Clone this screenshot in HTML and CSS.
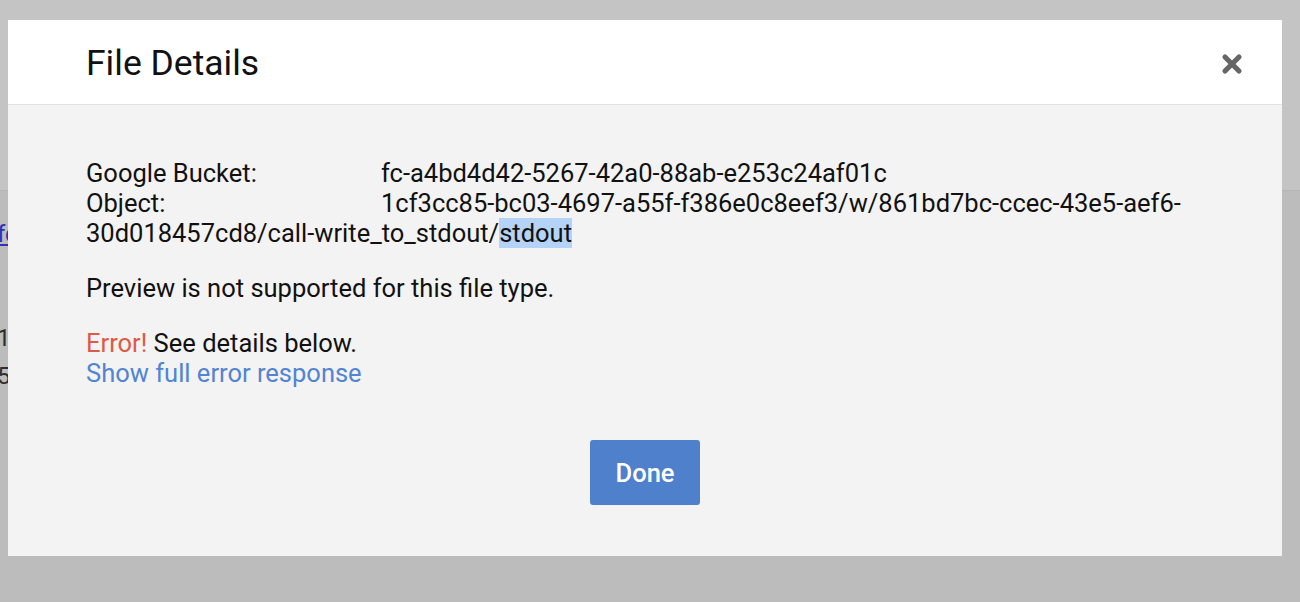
FILE: index.html
```html
<!doctype html>
<html lang="en">
	<head>
		<title>File Details</title>
		<meta charset="utf-8">
		<link rel="stylesheet" href="styles.css">
	</head>

<body>

	<!-- page behind the dialog, only its left edge shows -->
	<div class="page">
		<div class="page-top"></div>
		<div class="page-main">
			<div class="page-edge">
				<a class="page-link" href="#">fc</a>
				<div class="page-row first">1c</div>
				<div class="page-row">52</div>
			</div>
		</div>
	</div>

	<div class="backdrop">
		<div class="modal">
			<div class="modal-head">
				<h1 class="modal-title">File Details</h1>
				<button class="modal-close" aria-label="Close">
					<svg width="22" height="22" viewBox="0 0 22 22">
						<path d="M4 4 L18 18 M18 4 L4 18" stroke="#666" stroke-width="5.2" stroke-linecap="round"/>
					</svg>
				</button>
			</div>

			<div class="modal-body">
				<div class="details">
					<span class="label">Google Bucket:</span>fc-a4bd4d42-5267-42a0-88ab-e253c24af01c<br>
					<span class="label">Object:</span>1cf3cc85-bc03-4697-a55f-f386e0c8eef3/w/861bd7bc-ccec-43e5-aef6-<br>30d018457cd8/call-write_to_stdout/<span class="selected">stdout</span>
				</div>

				<p class="note">Preview is not supported for this file type.</p>

				<div class="error">
					<span class="error-word">Error!</span> See details below.<br>
					<a class="error-link" href="#">Show full error response</a>
				</div>

				<div class="actions">
					<button class="btn-done">Done</button>
				</div>
			</div>
		</div>
	</div>

</body>
</html>
```

FILE: styles.css
```css
html, body { margin: 0; padding: 0; }
body { font-family: Roboto, "Noto Sans", "Liberation Sans", sans-serif; background: #bebebe; overflow: hidden; height: 602px; }

/* page under the overlay */
.page { height: 602px; }
.page-top { height: 190px; background: #c4c4c4; border-bottom: 1px solid #b4b4b4; }
.page-main { background: #bcbcbc; height: 411px; padding-top: 28px; box-sizing: border-box; font-size: 24px; line-height: 30px; }
.page-edge { width: 8px; overflow: hidden; }
.page-link { display: block; margin-left: -3px; color: #3030b8; text-decoration: underline; white-space: nowrap; }
.page-row { margin-left: -3px; color: #2e2e2e; white-space: nowrap; height: 38px; line-height: 38px; }
.page-row.first { margin-top: 70px; }

.backdrop { position: absolute; top: 0; left: 0; right: 0; bottom: 0; }

.modal {
	position: absolute;
	top: 20px;
	left: 8px;
	width: 1274px;
	height: 536px;
	background: #f3f3f3;
	display: flex;
	flex-direction: column;
}

.modal-head {
	height: 84px;
	background: #fff;
	border-bottom: 1px solid #e2e2e2;
	display: flex;
	align-items: center;
	justify-content: space-between;
	padding: 0 39px 0 78px;
}
.modal-title { margin: 0; font-size: 35.5px; font-weight: 400; color: #111; padding-top: 2px; }
.modal-close { border: 0; background: none; padding: 0; width: 22px; height: 22px; cursor: pointer; margin-top: 4px; }
.modal-close svg { display: block; }

.modal-body { padding: 53px 78px 0 78px; font-size: 25.5px; line-height: 30px; color: #111; }

.label { display: inline-block; width: 295px; }
.selected { background: #b4d3f7; }

.note { margin: 25px 0 0 0; }

.error { margin-top: 25px; }
.error-word { color: #de5a45; }
.error-link { color: #5284d2; text-decoration: none; }

.actions { display: flex; justify-content: center; margin-top: 52px; }
.btn-done {
	width: 110px;
	height: 65px;
	border: 0;
	border-radius: 3px;
	background: #4f80cc;
	color: #fff;
	font-family: Roboto, "Noto Sans", sans-serif;
	font-size: 25.5px;
	font-weight: 500;
	cursor: pointer;
}
```
